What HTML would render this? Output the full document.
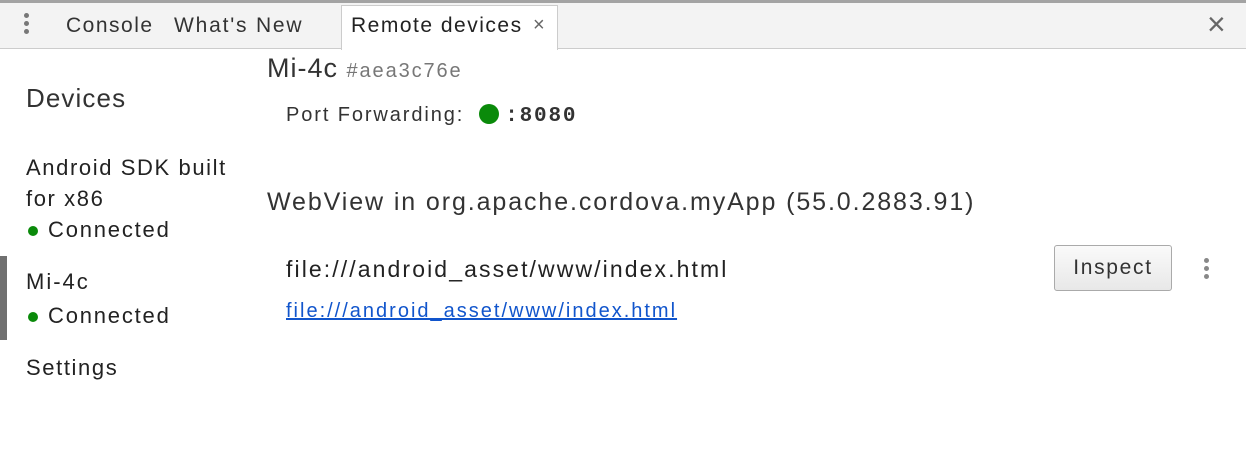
<!DOCTYPE html>
<html><head><meta charset="utf-8"><style>
body{margin:0;width:1246px;height:472px;background:#fff;font-family:"Liberation Sans",sans-serif;color:#222;position:relative;overflow:hidden}
.a{position:absolute;white-space:nowrap}
.dot{display:inline-block;width:10px;height:10px;border-radius:50%;background:#0a8a0a;margin-right:10px;vertical-align:1px}
</style></head><body>
<div class="a" style="left:0;top:0;width:1246px;height:3px;background:#a3a3a3"></div>
<div class="a" style="left:0;top:3px;width:1246px;height:45px;background:#f3f3f3;border-bottom:1px solid #ccc"></div>
<div class="a" style="left:24px;top:13px;width:5px;height:24px">
<div style="width:5px;height:5px;border-radius:50%;background:#777;margin-bottom:3px"></div>
<div style="width:5px;height:5px;border-radius:50%;background:#777;margin-bottom:3px"></div>
<div style="width:5px;height:5px;border-radius:50%;background:#777"></div></div>
<div class="a" style="left:66px;top:14px;font-size:21px;color:#333;letter-spacing:1.5px">Console</div>
<div class="a" style="left:174px;top:14px;font-size:21px;color:#333;letter-spacing:1.8px">What's New</div>
<div class="a" style="left:341px;top:5px;width:215px;height:44px;background:#fff;border:1px solid #ccc;border-bottom:none"></div>
<div class="a" style="left:351px;top:14px;font-size:21px;color:#222;letter-spacing:1.5px">Remote devices</div>
<div class="a" style="left:533px;top:14px;font-size:20px;color:#666">×</div>
<div class="a" style="left:1207px;top:6px;font-size:32px;color:#666;line-height:36px">×</div>

<div class="a" style="left:26px;top:83px;font-size:26px;color:#333;letter-spacing:1.1px">Devices</div>
<div class="a" style="left:26px;top:152px;font-size:22px;line-height:31px;letter-spacing:1.6px">Android SDK built<br>for x86</div>
<div class="a" style="left:28px;top:217px;font-size:22px;letter-spacing:1.8px"><span class="dot"></span>Connected</div>
<div class="a" style="left:0;top:256px;width:7px;height:84px;background:#707070"></div>
<div class="a" style="left:26px;top:269px;font-size:22px;letter-spacing:2px">Mi-4c</div>
<div class="a" style="left:28px;top:303px;font-size:22px;letter-spacing:1.8px"><span class="dot"></span>Connected</div>
<div class="a" style="left:26px;top:355px;font-size:22px;letter-spacing:1.6px">Settings</div>

<div class="a" style="left:267px;top:53px;font-size:27px;color:#333;letter-spacing:1px">Mi-4c <span style="font-size:20px;color:#777;letter-spacing:1.9px">#aea3c76e</span></div>
<div class="a" style="left:286px;top:104px;font-size:20px;color:#333;letter-spacing:1.9px">Port Forwarding:<span style="display:inline-block;width:20px;height:20px;border-radius:50%;background:#0a8a0a;vertical-align:-3px;margin-left:15px"></span><span style="font-family:'Liberation Mono',monospace;font-weight:bold;font-size:21px;letter-spacing:1.8px;margin-left:6px">:8080</span></div>
<div class="a" style="left:267px;top:188px;font-size:25px;color:#333;letter-spacing:1.9px">WebView in org.apache.cordova.myApp (55.0.2883.91)</div>
<div class="a" style="left:286px;top:256px;font-size:23px;color:#222;letter-spacing:2.1px">file:///android_asset/www/index.html</div>
<div class="a" style="left:286px;top:300px;font-size:20px;color:#1155cc;text-decoration:underline;letter-spacing:2px">file:///android_asset/www/index.html</div>
<div class="a" style="left:1054px;top:245px;width:118px;height:46px;border:1px solid #aaa;border-radius:3px;background:linear-gradient(#fafafa,#e8e8e8);box-sizing:border-box;text-align:center;line-height:44px;font-size:21px;color:#333;letter-spacing:1.7px">Inspect</div>
<div class="a" style="left:1204px;top:258px;width:5px">
<div style="width:5px;height:5px;border-radius:50%;background:#888;margin-bottom:3px"></div>
<div style="width:5px;height:5px;border-radius:50%;background:#888;margin-bottom:3px"></div>
<div style="width:5px;height:5px;border-radius:50%;background:#888"></div></div>
</body></html>
